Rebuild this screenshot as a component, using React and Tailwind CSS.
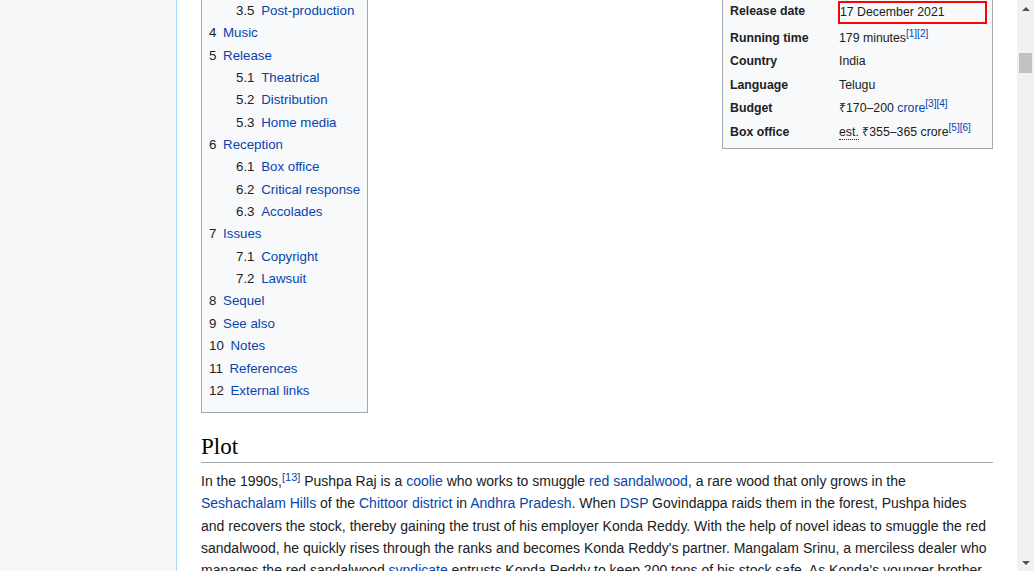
import React from "react";

const toc = [
  ["3.5", "Post-production", 2],
  ["4", "Music", 1],
  ["5", "Release", 1],
  ["5.1", "Theatrical", 2],
  ["5.2", "Distribution", 2],
  ["5.3", "Home media", 2],
  ["6", "Reception", 1],
  ["6.1", "Box office", 2],
  ["6.2", "Critical response", 2],
  ["6.3", "Accolades", 2],
  ["7", "Issues", 1],
  ["7.1", "Copyright", 2],
  ["7.2", "Lawsuit", 2],
  ["8", "Sequel", 1],
  ["9", "See also", 1],
  ["10", "Notes", 1],
  ["11", "References", 1],
  ["12", "External links", 1],
];

function L({ children }) {
  return <a className="text-[#0645ad]">{children}</a>;
}

function Sup({ children }) {
  return <sup className="text-[10px] text-[#0645ad]">{children}</sup>;
}

function Row({ label, children }) {
  return (
    <div className="flex h-[23.5px] items-center">
      <div className="w-[116px] shrink-0 pl-[7px] font-bold">{label}</div>
      <div className="whitespace-nowrap">{children}</div>
    </div>
  );
}

export default function App() {
  return (
    <div className="flex h-[571px] w-[1034px] overflow-hidden bg-white font-['Liberation_Sans',Arial,sans-serif] text-[#202122]">
      <div className="w-[176px] shrink-0 bg-[#f6f6f6]" />
      <main className="w-[841px] shrink-0 border-l border-[#a7d7f9] bg-white px-[24px]">
        <div className="flex items-start justify-between">
          <div className="w-[167px] border-x border-b border-[#a2a9b1] bg-[#f8f9fa] px-[7px] pb-[10px] text-[13.3px] leading-[22.35px]">
            {toc.map(([n, t, lvl]) => (
              <div
                key={n}
                className={lvl === 2 ? "flex whitespace-nowrap pl-[27px]" : "flex whitespace-nowrap"}
              >
                <span className="pr-[6.65px]">{n}</span>
                <a className="text-[#0645ad]">{t}</a>
              </div>
            ))}
          </div>
          <div className="w-[271px] border-x border-b border-[#a2a9b1] bg-[#f8f9fa] pb-[4px] text-[12.3px] leading-[18.5px]">
            <div className="flex h-[26px] pt-[1px]">
              <div className="w-[116px] shrink-0 pl-[7px] pt-[1px] font-bold">Release date</div>
              <div className="-ml-[1px] h-[23px] w-[149px] border-2 border-[#ff0000] leading-[19px] whitespace-nowrap">
                17 December 2021
              </div>
            </div>
            <Row label="Running time">
              179 minutes<Sup>[1][2]</Sup>
            </Row>
            <Row label="Country">India</Row>
            <Row label="Language">Telugu</Row>
            <Row label="Budget">
              ₹170–200 <L>crore</L>
              <Sup>[3][4]</Sup>
            </Row>
            <Row label="Box office">
              <abbr className="no-underline border-b border-dotted border-[#202122]">est.</abbr> ₹355–365 crore
              <Sup>[5][6]</Sup>
            </Row>
          </div>
        </div>
        <h2 className="mt-[19px] border-b border-[#a2a9b1] font-['Liberation_Serif',Georgia,serif] text-[23px] leading-[29.9px] text-black">
          Plot
        </h2>
        <p className="mt-[7px] whitespace-nowrap text-[14px] leading-[22.3px]">
          In the 1990s,<sup className="text-[11px] text-[#0645ad]">[13]</sup> Pushpa Raj is a <L>coolie</L> who works to smuggle{" "}
          <L>red sandalwood</L>, a rare wood that only grows in the
          <br />
          <L>Seshachalam Hills</L> of the <L>Chittoor district</L> in <L>Andhra Pradesh</L>. When <L>DSP</L> Govindappa raids them
          in the forest, Pushpa hides
          <br />
          and recovers the stock, thereby gaining the trust of his employer Konda Reddy. With the help of novel ideas to smuggle the red
          <br />
          sandalwood, he quickly rises through the ranks and becomes Konda Reddy's partner. Mangalam Srinu, a merciless dealer who
          <br />
          manages the red sandalwood <L>syndicate</L> entrusts Konda Reddy to keep 200 tons of his stock safe. As Konda's younger brother
        </p>
      </main>
      <div className="flex w-[17px] shrink-0 flex-col items-center bg-[#f1f1f1]">
        <div className="flex h-[17px] w-[17px] items-center justify-center">
          <svg width="8" height="4" viewBox="0 0 8 4">
            <polygon points="0,4 8,4 4,0" fill="#505050" />
          </svg>
        </div>
        <div className="mt-[36px] h-[20px] w-[13px] bg-[#c1c1c1]" />
        <div className="flex-1" />
        <div className="flex h-[17px] w-[17px] items-center justify-center">
          <svg width="8" height="4" viewBox="0 0 8 4">
            <polygon points="0,0 8,0 4,4" fill="#505050" />
          </svg>
        </div>
      </div>
    </div>
  );
}
